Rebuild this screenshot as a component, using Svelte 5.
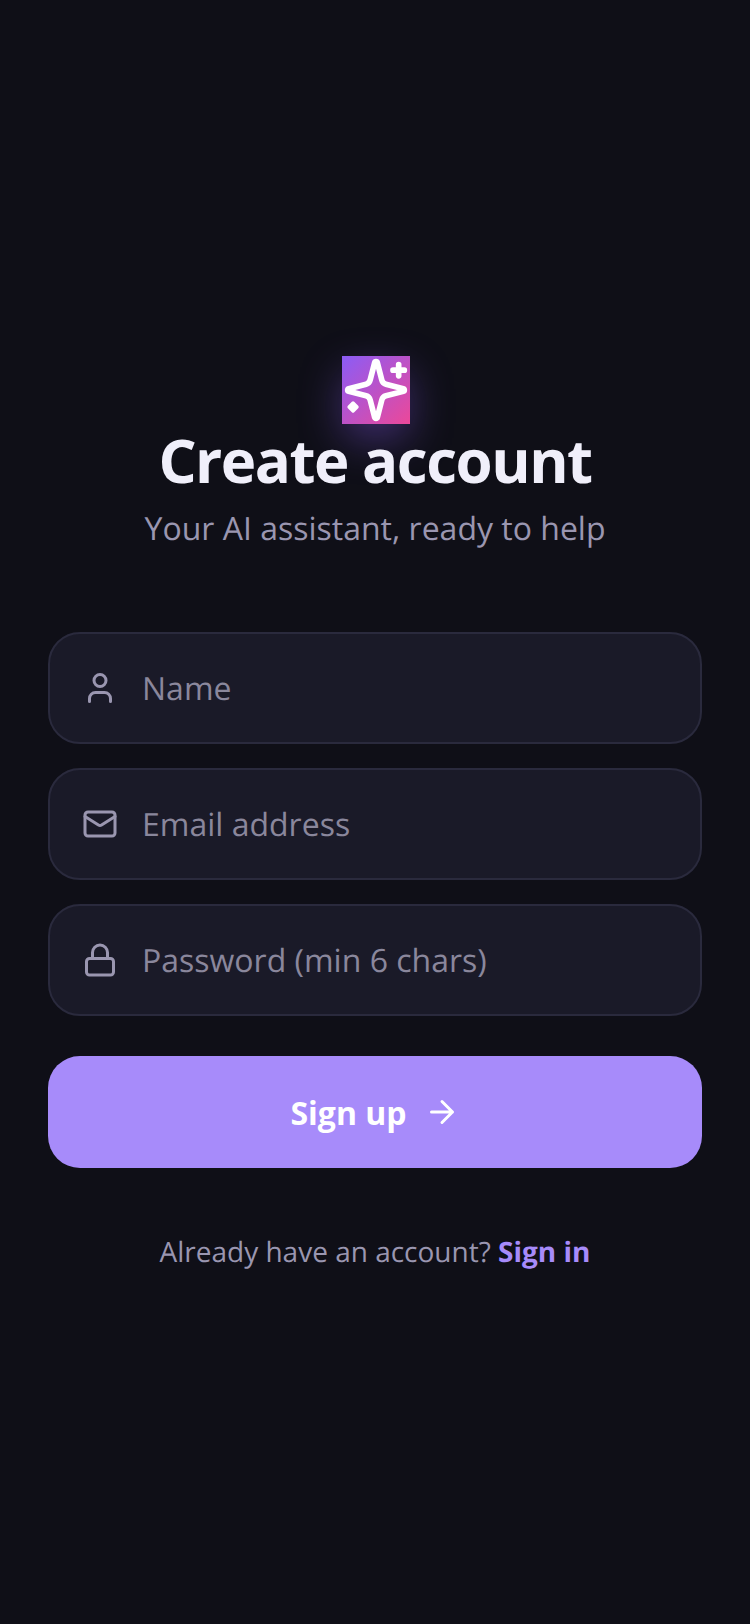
<script>
  const fields = [
    { icon: "user", label: "Name" },
    { icon: "mail", label: "Email address" },
    { icon: "lock", label: "Password (min 6 chars)" },
  ];
</script>

<div class="screen">
  <div class="logo">
    <svg viewBox="0 0 24 24" width="68" height="68" fill="none" stroke="#fff" stroke-width="2" stroke-linecap="round" stroke-linejoin="round">
      <path
        d="M9.937 15.5A2 2 0 0 0 8.5 14.063l-6.135-1.582a.5.5 0 0 1 0-.962L8.5 9.936A2 2 0 0 0 9.937 8.5l1.582-6.135a.5.5 0 0 1 .963 0L14.063 8.5A2 2 0 0 0 15.5 9.937l6.135 1.581a.5.5 0 0 1 0 .964L15.5 14.063a2 2 0 0 0-1.437 1.437l-1.582 6.135a.5.5 0 0 1-.963 0z"
      />
      <path d="M20 3v4M22 5h-4" />
      <path d="M3.9 16.6 5.3 18 3.9 19.4 2.5 18z" fill="#fff" stroke-width="1.2" />
    </svg>
  </div>
  <h1>Create account</h1>
  <p class="subtitle">Your AI assistant, ready to help</p>

  <form class="fields">
    {#each fields as field}
      <div class="field">
        <svg class="icon" viewBox="0 0 24 24" width="36" height="36" fill="none" stroke="#9a96b0" stroke-width="2" stroke-linecap="round" stroke-linejoin="round">
          {#if field.icon === "user"}
            <circle cx="12" cy="7" r="4" />
            <path d="M19 21v-2a4 4 0 0 0-4-4H9a4 4 0 0 0-4 4v2" />
          {:else if field.icon === "mail"}
            <rect x="2" y="4" width="20" height="16" rx="2" />
            <path d="m22 7-8.97 5.7a1.94 1.94 0 0 1-2.06 0L2 7" />
          {:else}
            <rect x="3" y="11" width="18" height="11" rx="2" />
            <path d="M7 11V7a5 5 0 0 1 10 0v4" />
          {/if}
        </svg>
        <span class="placeholder">{field.label}</span>
      </div>
    {/each}
  </form>

  <button type="button" class="submit">
    <span>Sign up</span>
    <svg viewBox="0 0 24 24" width="36" height="36" fill="none" stroke="#fff" stroke-width="2" stroke-linecap="round" stroke-linejoin="round">
      <path d="M5 12h14M12 5l7 7-7 7" />
    </svg>
  </button>

  <p class="footer">Already have an account? <strong>Sign in</strong></p>
</div>

<style>
  :global(body) {
    background: #0f0f17;
  }

  .screen {
    height: 1624px;
    box-sizing: border-box;
    display: flex;
    flex-direction: column;
    align-items: center;
    padding: 356px 48px 0;
    background: #0f0f17;
    font-family: "Open Sans", sans-serif;
    text-rendering: geometricPrecision;
  }

  .logo {
    width: 68px;
    height: 68px;
    margin-left: 1px;
    background: linear-gradient(135deg, #8b5cf6, #ec4899);
    box-shadow: 0 16px 44px -2px rgba(139, 92, 246, 0.42);
  }

  .logo svg {
    display: block;
  }

  h1 {
    margin: 0;
    font-size: 60px;
    line-height: 72px;
    font-weight: 700;
    color: #f0effa;
    letter-spacing: -1.5px;
  }

  .subtitle {
    margin: 11px 0 0;
    font-size: 32px;
    line-height: 44px;
    color: #9a96b0;
  }

  .fields {
    width: 100%;
    display: flex;
    flex-direction: column;
    gap: 24px;
    margin-top: 81px;
  }

  .field {
    height: 112px;
    box-sizing: border-box;
    display: flex;
    align-items: center;
    gap: 24px;
    padding: 0 30px 0 32px;
    background: #1a1a28;
    border: 2px solid #2a2a3d;
    border-radius: 32px;
  }

  .icon {
    flex: none;
  }

  .placeholder {
    font-size: 32px;
    color: #8a879c;
  }

  .submit {
    width: 100%;
    height: 112px;
    margin-top: 40px;
    display: flex;
    align-items: center;
    justify-content: center;
    gap: 17px;
    border: none;
    border-radius: 32px;
    background: #a78bfa;
    color: #fff;
    font-family: inherit;
    font-size: 32px;
    font-weight: 700;
  }

  .footer {
    margin: 65px 0 0;
    font-size: 28px;
    line-height: 38px;
    color: #9a96b0;
  }

  .footer strong {
    color: #a78bfa;
    font-weight: 700;
  }
</style>
